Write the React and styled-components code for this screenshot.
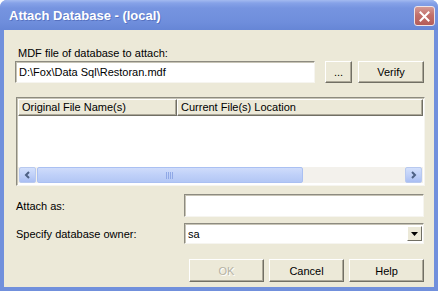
import React from "react";
import styled, { createGlobalStyle } from "styled-components";

const Global = createGlobalStyle`
  html, body { margin: 0; padding: 0; background: #ffffff; }
  body { font-family: "Liberation Sans", Arial, sans-serif; font-size: 11px; color: #000; }
`;

const Window = styled.div`
  width: 438px;
  height: 291px;
  background: #7190dc;
  border-radius: 7px 7px 0 0;
  display: flex;
  flex-direction: column;
  box-sizing: border-box;
  overflow: hidden;
`;

const TitleBar = styled.div`
  height: 30px;
  flex: none;
  display: flex;
  align-items: center;
  justify-content: space-between;
  padding: 0 3px 0 9px;
  background: linear-gradient(180deg, #a3baf0 0px, #86a2e8 3px, #7694e0 8px, #6f8edc 22px, #6686d6 30px);
`;

const Title = styled.span`
  color: #ffffff;
  font-family: "Liberation Sans", Arial, sans-serif;
  font-weight: bold;
  font-size: 13px;
  text-shadow: 1px 1px 0 rgba(40, 60, 140, 0.35);
`;

const CloseBox = styled.div`
  width: 21px;
  height: 20px;
  box-sizing: border-box;
  border: 1px solid #f0e4e6;
  border-radius: 3px;
  background: linear-gradient(180deg, #d59a95 0%, #c2706b 45%, #b45d5a 100%);
  display: flex;
  align-items: center;
  justify-content: center;
  margin-top: 2px;
`;

const Client = styled.div`
  flex: 1;
  margin: 0 4px 4px 4px;
  background: #ece9d8;
  display: flex;
  flex-direction: column;
  padding: 17px 10px 0 11px;
  box-sizing: border-box;
`;

const Label = styled.div`
  line-height: 13px;
  height: 13px;
  padding-left: ${(p) => p.$indent || 1}px;
`;

const Row = styled.div`
  display: flex;
  align-items: center;
  margin-top: ${(p) => p.$mt || 0}px;
`;

const TextBox = styled.div`
  box-sizing: border-box;
  width: ${(p) => p.$w}px;
  height: ${(p) => p.$h || 23}px;
  background: #ffffff;
  border-top: 1px solid #8d8b80;
  border-left: 1px solid #8d8b80;
  border-right: 1px solid #f6f5f0;
  border-bottom: 1px solid #f6f5f0;
  box-shadow: inset 1px 1px 0 #c7c4b6;
  display: flex;
  align-items: center;
  padding-left: 3px;
  white-space: nowrap;
  overflow: hidden;
`;

const Button = styled.div`
  box-sizing: border-box;
  width: ${(p) => p.$w}px;
  height: ${(p) => p.$h || 23}px;
  margin-left: ${(p) => p.$ml || 0}px;
  background: #ece9d8;
  border-top: 1px solid #ffffff;
  border-left: 1px solid #ffffff;
  border-right: 1px solid #716f64;
  border-bottom: 1px solid #716f64;
  box-shadow: inset -1px -1px 0 #aca899;
  display: flex;
  align-items: center;
  justify-content: center;
  color: ${(p) => (p.$disabled ? "#b5b2a4" : "#000")};
  text-shadow: ${(p) => (p.$disabled ? "1px 1px 0 #ffffff" : "none")};
  flex: none;
`;

const Spacer = styled.div`
  flex: 1;
`;

const ListView = styled.div`
  box-sizing: border-box;
  margin-top: 14px;
  width: 409px;
  height: 89px;
  margin-left: 1px;
  background: #ffffff;
  border-top: 1px solid #8d8b80;
  border-left: 1px solid #8d8b80;
  border-right: 1px solid #f6f5f0;
  border-bottom: 1px solid #f6f5f0;
  box-shadow: inset 1px 1px 0 #c7c4b6;
  display: flex;
  flex-direction: column;
  padding: 1px 1px 2px 1px;
`;

const Header = styled.div`
  display: flex;
  height: 17px;
  flex: none;
`;

const HeaderCell = styled.div`
  box-sizing: border-box;
  width: ${(p) => (p.$w ? `${p.$w}px` : "auto")};
  flex: ${(p) => (p.$w ? "none" : "1")};
  height: 17px;
  background: #ece9d8;
  border-top: 1px solid #ffffff;
  border-left: 1px solid #ffffff;
  border-right: 1px solid #716f64;
  border-bottom: 1px solid #716f64;
  box-shadow: inset -1px -1px 0 #aca899;
  line-height: 15px;
  padding-left: 3px;
  white-space: nowrap;
`;

const ListBody = styled.div`
  flex: 1;
`;

const HScroll = styled.div`
  height: 16px;
  flex: none;
  display: flex;
  background: #f3f1ec;
  padding: 0 1px 0 1px;
  box-sizing: border-box;
`;

const ScrollArrow = styled.div`
  width: 17px;
  height: 16px;
  box-sizing: border-box;
  border: 1px solid #b8c9ef;
  border-radius: 2px;
  background: linear-gradient(180deg, #d3e0fc 0%, #bccdf7 60%, #a9bef3 100%);
  display: flex;
  align-items: center;
  justify-content: center;
`;

const Thumb = styled.div`
  width: 266px;
  height: 16px;
  box-sizing: border-box;
  margin-left: 1px;
  border: 1px solid #aac0f2;
  border-radius: 2px;
  background: linear-gradient(180deg, #cfdcfb 0%, #bfd0f8 50%, #b3c7f5 100%);
  display: flex;
  align-items: center;
  justify-content: center;
`;

const Track = styled.div`
  flex: 1;
`;

const Grip = styled.div`
  width: 8px;
  height: 7px;
  background: repeating-linear-gradient(90deg, #8fa8e6 0px, #8fa8e6 1px, transparent 1px, transparent 2px);
`;

const FieldRow = styled.div`
  display: flex;
  align-items: center;
  margin-top: ${(p) => p.$mt || 0}px;
  padding-left: 1px;
`;

const FieldLabel = styled.div`
  width: 168px;
  flex: none;
`;

const ComboArrow = styled.div`
  width: 15px;
  height: 15px;
  box-sizing: border-box;
  margin-left: auto;
  margin-right: 1px;
  background: #ece9d8;
  border-top: 1px solid #ffffff;
  border-left: 1px solid #ffffff;
  border-right: 1px solid #716f64;
  border-bottom: 1px solid #716f64;
  display: flex;
  align-items: center;
  justify-content: center;
`;

const ButtonRow = styled.div`
  display: flex;
  justify-content: flex-end;
  gap: 5px;
  margin-top: 15px;
`;

export default function App() {
  return (
    <>
      <Global />
      <Window>
        <TitleBar>
          <Title>Attach Database - (local)</Title>
          <CloseBox>
            <svg width="11" height="11" viewBox="0 0 11 11">
              <path d="M1.5 1.5 L9.5 9.5 M9.5 1.5 L1.5 9.5" stroke="#ffffff" strokeWidth="2" strokeLinecap="square" />
            </svg>
          </CloseBox>
        </TitleBar>
        <Client>
          <Label $indent={3}>MDF file of database to attach:</Label>
          <Row $mt={1}>
            <TextBox $w={300} $h={22}>D:\Fox\Data Sql\Restoran.mdf</TextBox>
            <Spacer />
            <Button $w={27} $h={22}>...</Button>
            <Button $w={66} $h={22} $ml={6}>Verify</Button>
          </Row>
          <ListView>
            <Header>
              <HeaderCell $w={159}>Original File Name(s)</HeaderCell>
              <HeaderCell>Current File(s) Location</HeaderCell>
            </Header>
            <ListBody />
            <HScroll>
              <ScrollArrow>
                <svg width="7" height="8" viewBox="0 0 7 8">
                  <path d="M5 1 L2 4 L5 7" stroke="#4d6185" strokeWidth="2" fill="none" />
                </svg>
              </ScrollArrow>
              <Thumb>
                <Grip />
              </Thumb>
              <Track />
              <ScrollArrow>
                <svg width="7" height="8" viewBox="0 0 7 8">
                  <path d="M2 1 L5 4 L2 7" stroke="#4d6185" strokeWidth="2" fill="none" />
                </svg>
              </ScrollArrow>
            </HScroll>
          </ListView>
          <FieldRow $mt={8}>
            <FieldLabel>Attach as:</FieldLabel>
            <TextBox $w={241} $h={23} />
          </FieldRow>
          <FieldRow $mt={6}>
            <FieldLabel>Specify database owner:</FieldLabel>
            <TextBox $w={241} $h={21}>
              sa
              <ComboArrow>
                <svg width="7" height="4" viewBox="0 0 7 4">
                  <path d="M0 0 L7 0 L3.5 4 Z" fill="#000" />
                </svg>
              </ComboArrow>
            </TextBox>
          </FieldRow>
          <ButtonRow>
            <Button $w={75} $disabled>OK</Button>
            <Button $w={75}>Cancel</Button>
            <Button $w={75}>Help</Button>
          </ButtonRow>
        </Client>
      </Window>
    </>
  );
}
